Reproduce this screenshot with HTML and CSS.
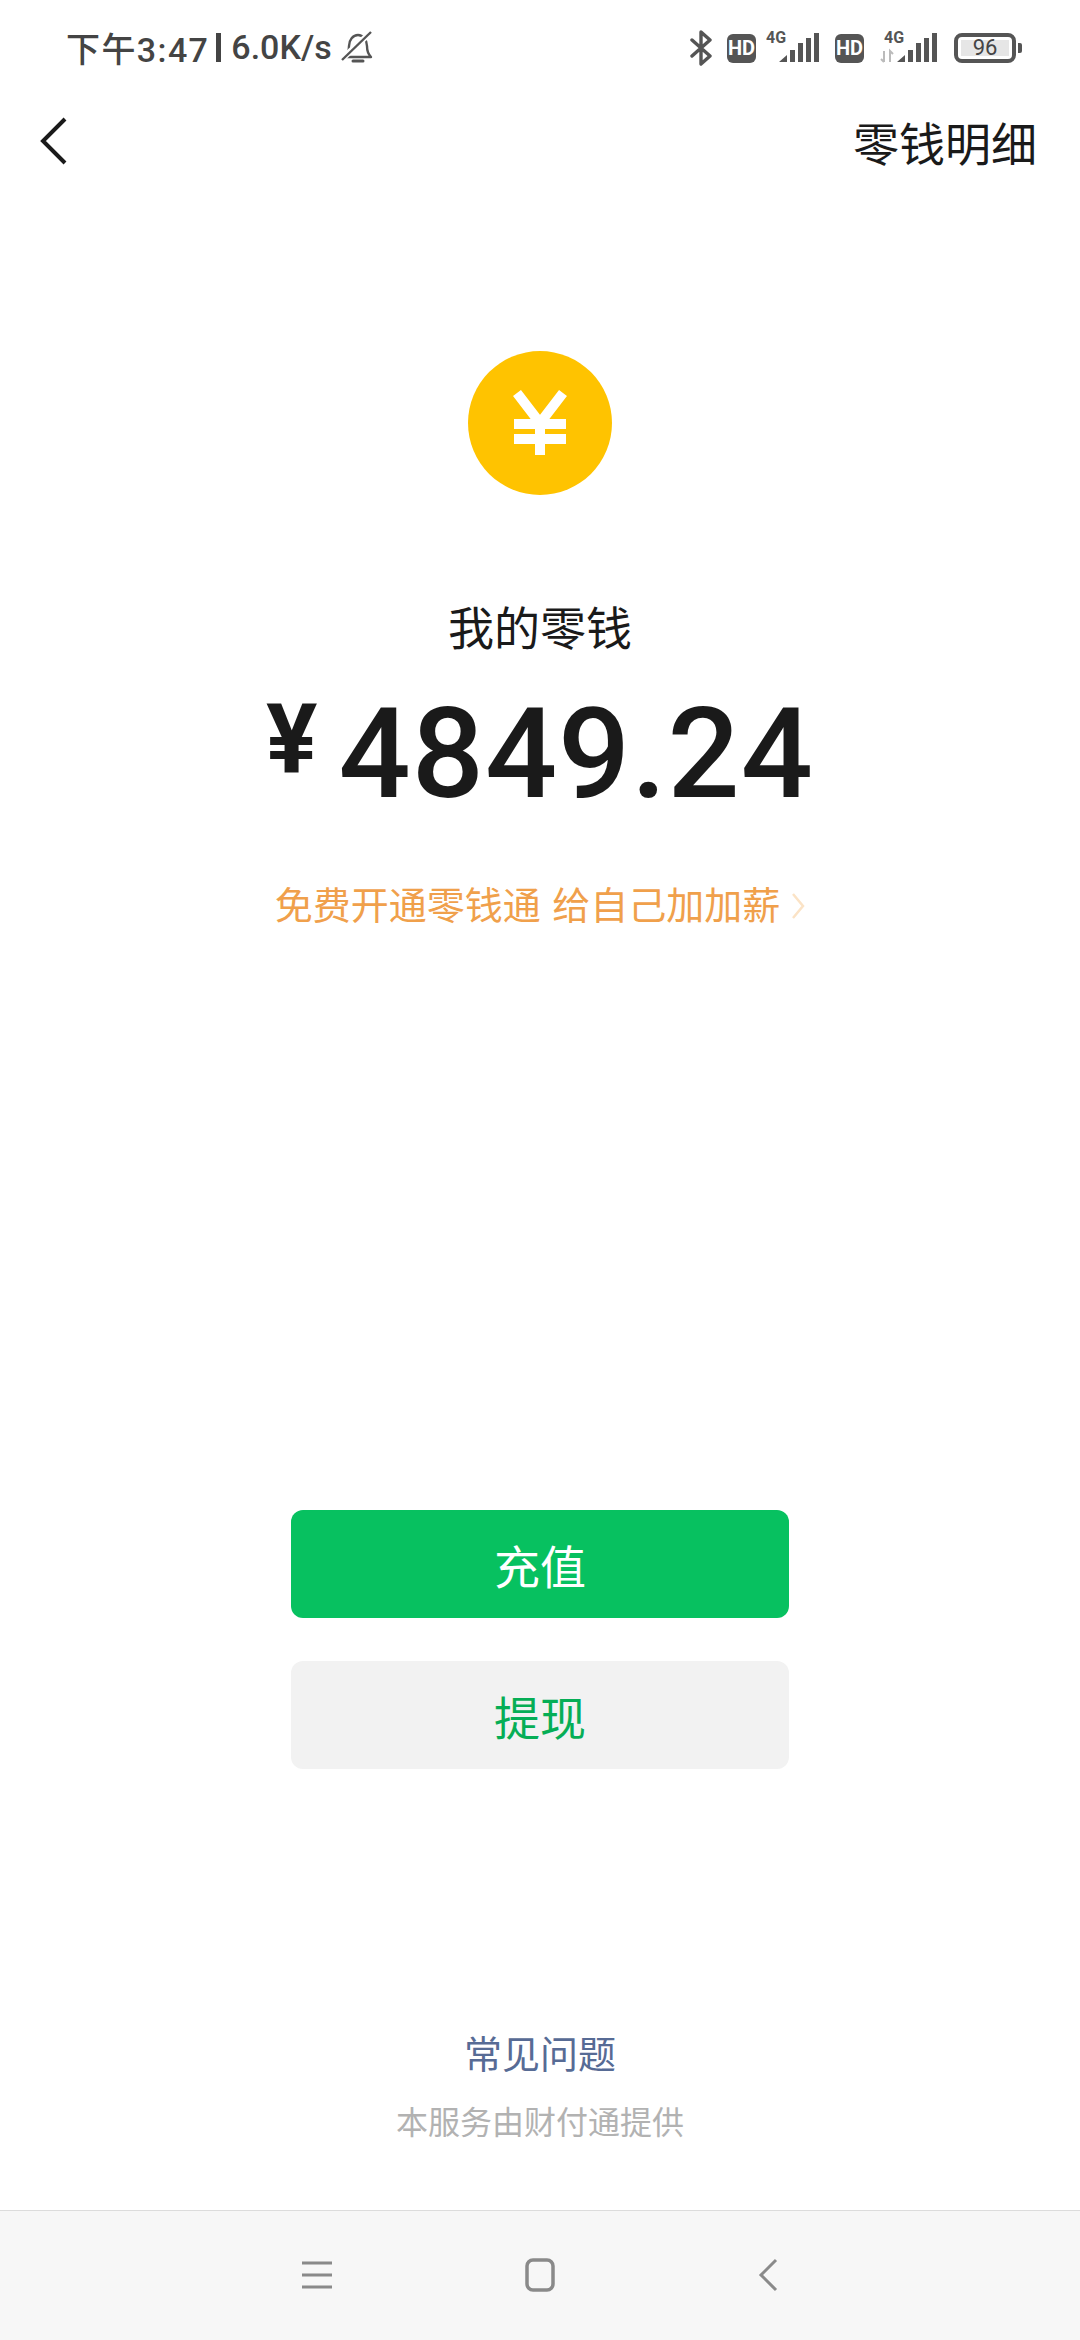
FILE: index.html

```html
<!DOCTYPE html>
<html>
<head>
    <meta charset="utf-8">
    <title>零钱</title>
    <link rel="stylesheet" href="styles.css">
</head>
<body>
<div class="page">
    <div class="status-bar">
        <div class="status-left">
            <span class="status-time">下午3:47</span>
            <span class="status-sep"></span>
            <span>6.0K/s</span>
            <svg class="bell" width="34" height="34" viewBox="0 0 34 34">
                <path d="M4 27h26c-3-3-4-6-4-11 0-6-4-11-9-11s-9 5-9 11c0 5-1 8-4 11z" fill="none" stroke="#555" stroke-width="2.4" stroke-linejoin="round"/>
                <path d="M12 31h10" stroke="#555" stroke-width="3" stroke-linecap="round"/>
                <path d="M1 29L30 2" stroke="#fff" stroke-width="6"/>
                <path d="M1 30L30 2" stroke="#555" stroke-width="2.4"/>
            </svg>
        </div>
        <div class="status-right">
            <svg class="bt" width="22" height="36" viewBox="0 0 22 36">
                <path d="M2 10l18 16-9 8V2l9 8L2 26" fill="none" stroke="#555" stroke-width="3.4" stroke-linejoin="round" stroke-linecap="round"/>
            </svg>
            <span class="hd hd-first">HD</span>
            <svg class="sim sim-first" width="54" height="40" viewBox="0 0 54 40">
                <text x="0" y="15" class="sim-text">4G</text>
                <path d="M13 34l8-7v7zM24 22h5v12h-5zM32 15h5v19h-5zM40 10h5v24h-5zM48 5h5v29h-5z" fill="#555"/>
            </svg>
            <span class="hd hd-second">HD</span>
            <svg class="sim sim-second" width="58" height="40" viewBox="0 0 58 40">
                <text x="4" y="15" class="sim-text">4G</text>
                <path d="M4 23v11M1 31l3 3M10 34V23l3 3" fill="none" stroke="#bbb" stroke-width="2"/>
                <path d="M17 34l8-7v7zM28 22h5v12h-5zM36 15h5v19h-5zM44 10h5v24h-5zM52 5h5v29h-5z" fill="#555"/>
            </svg>
            <div class="battery">
                <div class="battery-body"><span class="battery-level">96</span></div>
                <div class="battery-nub"></div>
            </div>
        </div>
    </div>

    <div class="nav">
        <svg width="30" height="48" viewBox="0 0 30 48">
            <path d="M25 2L3 24l22 22" fill="none" stroke="#1a1a1a" stroke-width="4"/>
        </svg>
        <div class="nav-title">零钱明细</div>
    </div>

    <div class="main">
        <div class="coin">
            <svg width="144" height="144" viewBox="0 -1 144 144">
                <path d="M49 41l23 30 23-30M72 71v32M46 72h52M46 87h52" fill="none" stroke="#fff" stroke-width="10"/>
            </svg>
        </div>
        <div class="label">我的零钱</div>
        <div class="amount">
            <span class="amount-yen">¥</span>
            <span class="amount-num">4849.24</span>
        </div>
        <div class="promo">
            <span>免费开通零钱通 给自己加加薪</span>
            <svg width="14" height="28" viewBox="0 0 14 28">
                <path d="M2 2l10 12L2 26" fill="none" stroke="#fbe3c6" stroke-width="2.5"/>
            </svg>
        </div>
        <div class="actions">
            <button type="button" class="btn btn-green">充值</button>
            <button type="button" class="btn btn-gray">提现</button>
        </div>
        <div class="footer">
            <div class="faq">常见问题</div>
            <div class="provider">本服务由财付通提供</div>
        </div>
    </div>

    <div class="sys-nav">
        <svg width="32" height="30" viewBox="0 0 32 30">
            <path d="M1 3h30M1 15h30M1 27h30" stroke="#8a8a8a" stroke-width="3"/>
        </svg>
        <svg width="32" height="34" viewBox="0 0 32 34">
            <rect x="3" y="2" width="26" height="30" rx="6" fill="none" stroke="#8a8a8a" stroke-width="3.5"/>
        </svg>
        <svg width="32" height="34" viewBox="-11 0 32 34">
            <path d="M18 2L3 17l15 15" fill="none" stroke="#8a8a8a" stroke-width="3"/>
        </svg>
    </div>
</div>
</body>
</html>
```

FILE: styles.css

```css
html,
body {
    margin: 0;
    background: #fff;
}
.page {
    width: 1080px;
    height: 2340px;
    display: flex;
    flex-direction: column;
    overflow: hidden;
    font-family: Roboto, "Noto Sans CJK SC", sans-serif;
}

/* status bar */
.status-bar {
    height: 96px;
    display: flex;
    justify-content: space-between;
    align-items: center;
    padding: 0 58px 0 66px;
    flex: none;
}
.status-left {
    display: flex;
    align-items: center;
    padding-bottom: 2px;
    font-size: 34px;
    font-weight: 500;
    color: #444;
}
.status-time {
    letter-spacing: 1.4px;
}
.status-sep {
    width: 5px;
    height: 29px;
    background: #444;
    margin: 0 10px 0 7px;
}
.bell {
    margin-left: 9px;
}
.status-right {
    display: flex;
    align-items: center;
}
.hd {
    width: 29px;
    height: 29px;
    border-radius: 6px;
    background: #555;
    color: #fff;
    font-size: 20px;
    font-weight: 700;
    line-height: 29px;
    text-align: center;
}
.hd-first {
    margin-left: 15px;
}
.sim-first {
    margin-left: 10px;
}
.hd-second {
    margin-left: 15px;
}
.sim-second {
    margin-left: 16px;
}
.sim-text {
    font-family: Roboto, sans-serif;
    font-size: 16px;
    font-weight: 700;
    fill: #555;
}
.battery {
    display: flex;
    align-items: center;
    margin-left: 16px;
}
.battery-body {
    width: 62px;
    height: 30px;
    box-sizing: border-box;
    border: 4px solid #555;
    border-radius: 8px;
    padding: 3px;
    display: flex;
}
.battery-level {
    flex: 1;
    background: #e6e6e6;
    color: #444;
    font-size: 22px;
    line-height: 16px;
    text-align: center;
}
.battery-nub {
    width: 4px;
    height: 10px;
    margin-left: 2px;
    background: #555;
    border-radius: 0 2px 2px 0;
}

/* title row */
.nav {
    height: 90px;
    display: flex;
    justify-content: space-between;
    align-items: center;
    padding: 0 43px 0 40px;
    flex: none;
}
.nav-title {
    font-size: 46px;
    color: #1a1a1a;
}

/* content */
.main {
    flex: 1;
    display: flex;
    flex-direction: column;
    align-items: center;
}
.coin {
    width: 144px;
    height: 144px;
    margin-top: 165px;
    border-radius: 50%;
    background: #ffc300;
}
.coin svg {
    display: block;
}
.label {
    margin-top: 104px;
    font-size: 46px;
    line-height: 60px;
    color: #1a1a1a;
}
.amount {
    display: flex;
    align-items: flex-start;
    margin-top: 20px;
    color: #1a1a1a;
}
.amount-yen {
    margin-top: 5px;
    font-size: 96px;
    font-weight: 700;
    line-height: 110px;
    margin-right: 21px;
}
.amount-num {
    font-size: 127px;
    font-weight: 500;
    line-height: 150px;
    letter-spacing: 1px;
}
.promo {
    display: flex;
    align-items: center;
    margin-top: 51px;
    font-size: 38px;
    line-height: 52px;
    word-spacing: 2px;
    color: #f0a04b;
}
.promo svg {
    margin-left: 11px;
}
.actions {
    display: flex;
    flex-direction: column;
    gap: 43px;
    margin-top: 578px;
}
.btn {
    width: 498px;
    height: 108px;
    border: 0;
    border-radius: 12px;
    padding: 0;
    font-family: inherit;
    font-size: 46px;
}
.btn-green {
    background: #07c160;
    color: #fff;
}
.btn-gray {
    background: #f2f2f2;
    color: #06ae56;
}
.footer {
    margin-top: 258px;
    text-align: center;
}
.faq {
    font-size: 38px;
    line-height: 56px;
    color: #576b95;
}
.provider {
    margin-top: 18px;
    font-size: 32px;
    line-height: 44px;
    color: #b2b2b2;
}

/* system navigation */
.sys-nav {
    height: 130px;
    flex: none;
    display: flex;
    justify-content: space-between;
    align-items: center;
    padding: 0 301px 2px;
    box-sizing: border-box;
    background: #f7f7f7;
    border-top: 1px solid #dcdcdc;
}
```
